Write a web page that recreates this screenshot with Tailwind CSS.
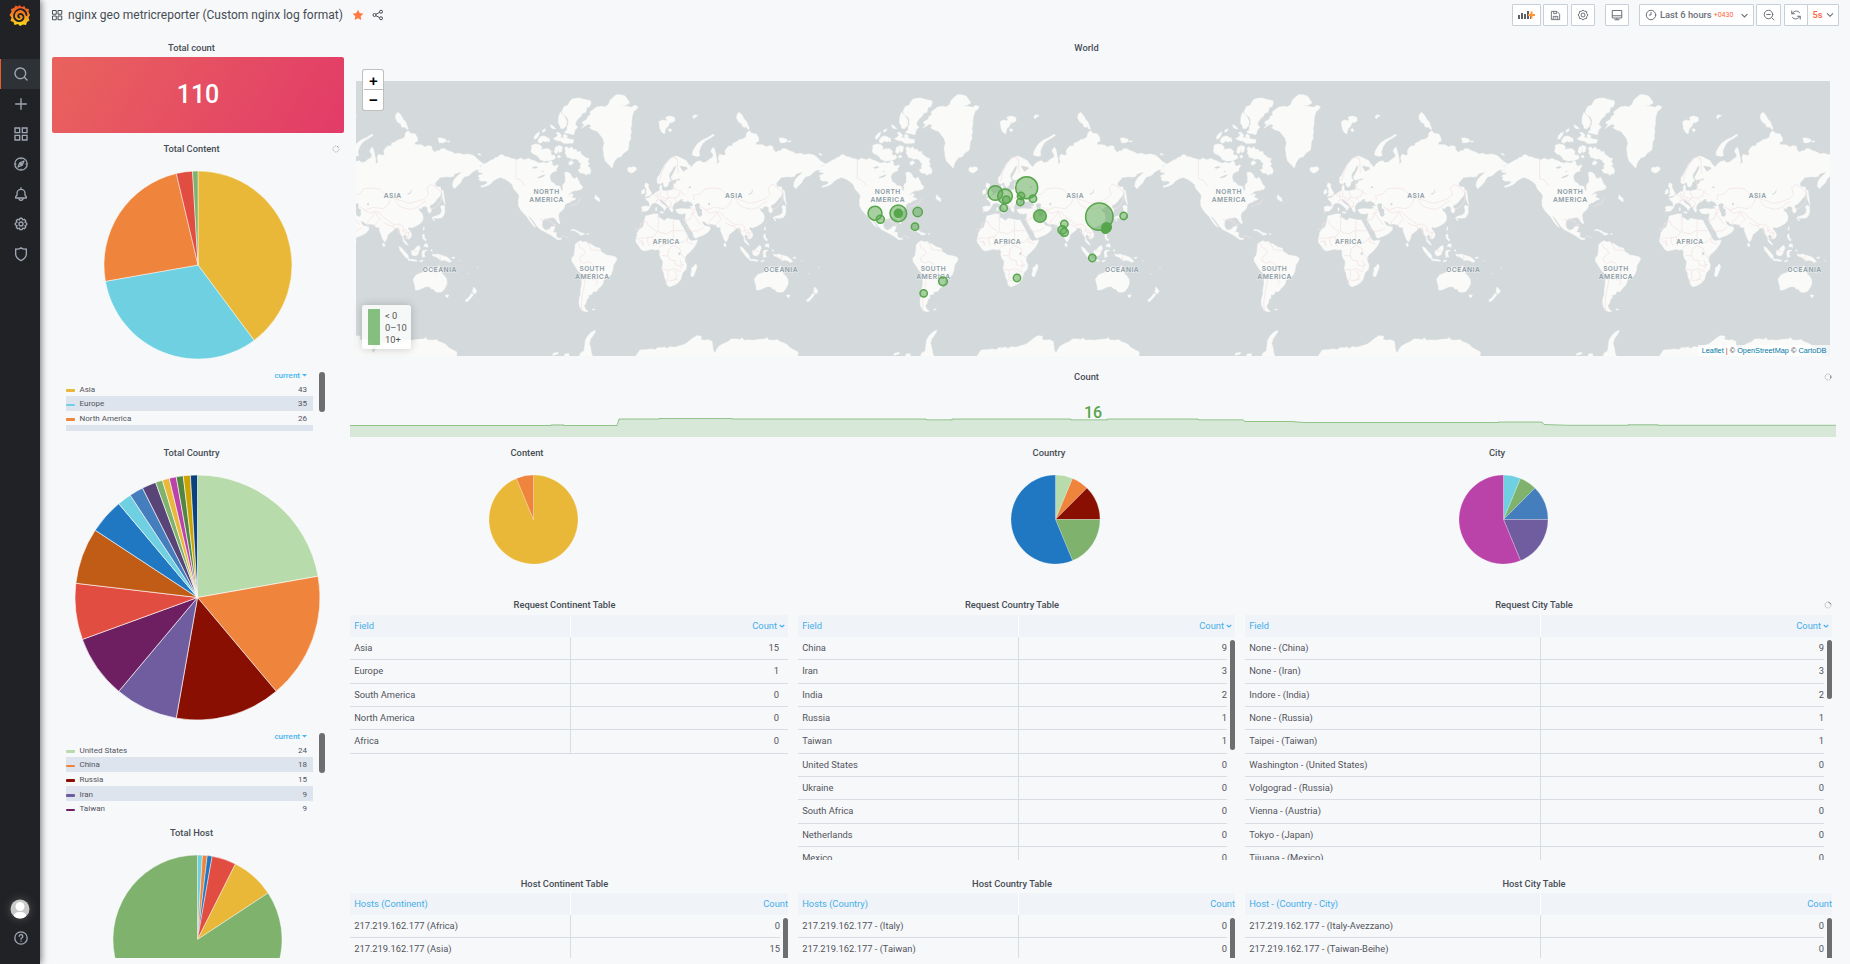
<!DOCTYPE html>
<html lang="en">
<head>
<meta charset="utf-8">
<title>nginx geo metricreporter</title>
<script src="https://cdn.jsdelivr.net/npm/@tailwindcss/browser@4"></script>
</head>
<body class="h-[964px] w-[1850px] overflow-hidden bg-[#f7f8fa] font-['Roboto',sans-serif] text-[9.33px] text-[#52545c]">
<div class="flex h-full">

<!-- side menu -->
<nav class="relative z-10 flex w-10 shrink-0 flex-col items-center bg-[#212226] text-[#9fa7b3] shadow-[1px_0_7px_rgba(0,0,0,.55)]">
  <svg class="mt-[5px] ml-[-1px] size-[21px]" viewBox="0 0 42 42">
    <defs><linearGradient id="gl" x1="0" y1="1" x2="0" y2="0"><stop offset="0" stop-color="#fbe01c"/><stop offset=".45" stop-color="#f7941e"/><stop offset="1" stop-color="#ee4c25"/></linearGradient></defs>
    <path fill="url(#gl)" d="M21 0l4 4 6-2 2 5 7 1-1 6 3 6-3 5 2 6-5 3-2 6-6-1-6 3-4-4-7 2-2-6-6-2 2-7-4-5 4-6-1-6 6-2 3-5 5 2z"/>
    <path fill="none" stroke="#212226" stroke-width="3.6" stroke-linecap="round" d="M35 20C34 10 24 6 17 10c-8 4-9 14-4 19 5 5 14 4 16-3 1-6-5-10-9-7-3 2-2 6 1 6"/>
  </svg>
  <div class="mt-[33px] flex h-[30px] w-full items-center border-l border-[#f05a28] bg-[#2e3236] pl-[12px]">
    <svg class="size-4" viewBox="0 0 24 24" fill="currentColor"><path d="M21.71,20.29,18,16.61A9,9,0,1,0,16.61,18l3.68,3.68a1,1,0,0,0,1.42,0A1,1,0,0,0,21.71,20.29ZM11,18a7,7,0,1,1,7-7A7,7,0,0,1,11,18Z"/></svg>
  </div>
  <div class="ml-[2px] flex flex-col gap-[14px] pt-[7px]">
    <svg class="size-4" viewBox="0 0 24 24" fill="none" stroke="currentColor" stroke-width="2" stroke-linecap="round"><path d="M12 4v16M4 12h16"/></svg>
    <svg class="size-4" viewBox="0 0 24 24" fill="none" stroke="currentColor" stroke-width="2"><path d="M3 3h7v7H3zM14 3h7v7h-7zM3 14h7v7H3zM14 14h7v7h-7z"/></svg>
    <svg class="size-4" viewBox="0 0 24 24" fill="none" stroke="currentColor" stroke-width="2"><circle cx="12" cy="12" r="9.3"/><path d="M16.5 7.5l-2.7 6.3-6.3 2.7 2.7-6.3zM12 3v2M12 19v2M3 12h2M19 12h2" stroke-linejoin="round"/><circle cx="12" cy="12" r=".8"/></svg>
    <svg class="size-4" viewBox="0 0 24 24" fill="none" stroke="currentColor" stroke-width="2" stroke-linejoin="round"><path d="M12 2v3M6 14v-3a6 6 0 0 1 12 0v3l2 2v2H4v-2zM9 18.5a3 3 0 0 0 6 0"/></svg>
    <svg class="size-4" viewBox="0 0 24 24" fill="none" stroke="currentColor" stroke-width="2" stroke-linejoin="round"><path d="M9.5 5l1-2.5h3l1 2.5 2.4-1 2.2 2.2-1 2.4 2.4 1v3l-2.4 1 1 2.4-2.2 2.2-2.4-1-1 2.4h-3l-1-2.4-2.4 1L4.900 16l1-2.400-2.400-1v-3l2.400-1-1-2.400L7.100 4z" transform="translate(0 .9)"/><circle cx="12" cy="12" r="3"/></svg>
    <svg class="size-4" viewBox="0 0 24 24" fill="none" stroke="currentColor" stroke-width="2" stroke-linejoin="round"><path d="M12 2.500c-2 1.800-4.500 2.400-8 2V12c0 4 3 7.500 8 9.800 5-2.300 8-5.800 8-9.800V4.500c-3.500.4-6-.2-8-2z"/></svg>
  </div>
  <div class="mt-auto flex flex-col items-center gap-[11px] pb-[18px]">
    <svg class="size-5 drop-shadow-[0_0_4px_#555]" viewBox="0 0 20 20"><clipPath id="av"><circle cx="10" cy="10" r="9.500"/></clipPath><g clip-path="url(#av)"><path fill="#c9c9c9" d="M0 0h20v20H0z"/><circle cx="10" cy="7.500" r="4.500" fill="#fff"/><path fill="#fff" d="M3.500 20c0-5.500 2-7 6.500-7s6.500 1.500 6.500 7z"/></g></svg>
    <svg class="ml-[2px] size-4" viewBox="0 0 24 24" fill="none" stroke="currentColor" stroke-width="2" stroke-linecap="round"><circle cx="12" cy="12" r="9.300"/><path d="M9.300 9.500a2.700 2.700 0 1 1 4 2.400c-1 .5-1.300 1-1.300 1.800M12 16.600v.2"/></svg>
  </div>
</nav>

<div class="flex min-w-0 flex-1 flex-col">
<!-- toolbar -->
<header class="flex h-[30px] shrink-0 items-center pl-[11px] pr-[11px] text-[#464c54]">
  <svg class="size-3" viewBox="0 0 24 24" fill="none" stroke="currentColor" stroke-width="2"><path d="M3 3h7.500v7.500H3zM14 3h7.500v7.500H14zM3 14h7.500v7.500H3zM14 14h7.500v7.500H14z"/></svg>
  <h1 class="ml-[5px] text-[12px] leading-[31px] whitespace-nowrap">nginx geo metricreporter (Custom nginx log format)</h1>
  <svg class="ml-[9px] size-3" viewBox="0 0 24 24" fill="#ff7941"><path d="M12 1.500l3.300 6.700 7.400 1.100-5.300 5.200 1.200 7.400-6.600-3.500-6.600 3.500 1.200-7.400L1.300 9.300l7.400-1.100z"/></svg>
  <svg class="ml-[8px] size-3" viewBox="0 0 24 24" fill="none" stroke="currentColor" stroke-width="2"><circle cx="5" cy="12" r="3"/><circle cx="18" cy="5.500" r="3"/><circle cx="18" cy="18.500" r="3"/><path d="M7.700 10.700l7.600-4M7.700 13.300l7.600 4"/></svg>
  <div class="ml-auto flex h-[22px] items-stretch text-[#6b6f78]">
    <div class="flex w-[29px] items-center justify-center rounded-[1px] border border-[#c7d0d9] bg-white"><svg class="h-[10px] w-[17px]" viewBox="0 0 17 10"><path fill="#5c6069" d="M0 5h2v4H0zM3 3h2v6H3zM6 4h2v5H6zM9 1h2v8H9zM12 5.500h1V9h-1z"/><path fill="#ff9830" d="M10 4h2.500V1.500h2V4H17v2h-2.500v2.500h-2V6H10z"/></svg></div>
    <div class="ml-[2px] flex w-[25px] items-center justify-center rounded-[1px] border border-[#c7d0d9] bg-white"><svg class="size-[11px]" viewBox="0 0 24 24" fill="none" stroke="currentColor" stroke-width="2" stroke-linejoin="round"><path d="M3 3h12l6 6v12H3zM8 3v5h6V3M7 21v-7h10v7M10 17.500h4"/></svg></div>
    <div class="ml-[3px] flex w-6 items-center justify-center rounded-[1px] border border-[#c7d0d9] bg-white"><svg class="size-[12px]" viewBox="0 0 24 24" fill="none" stroke="currentColor" stroke-width="2" stroke-linejoin="round"><path d="M9 4.500L12 2l3 2.500 4 .5.500 4L22 12l-2.500 3-.5 4-4 .5L12 22l-3-2.500-4-.5-.5-4L2 12l2.500-3 .5-4z"/><circle cx="12" cy="12" r="4"/></svg></div>
    <div class="ml-[10px] flex w-6 items-center justify-center rounded-[1px] border border-[#c7d0d9] bg-white"><svg class="size-[12px]" viewBox="0 0 24 24" fill="none" stroke="currentColor" stroke-width="2" stroke-linejoin="round"><path d="M2.500 3h19v15h-19zM2.500 13.500h19M12 18v3.500M7 21.500h10"/></svg></div>
    <div class="ml-[10px] flex w-[115px] items-center rounded-[1px] border border-[#c7d0d9] bg-white pl-[5px] whitespace-nowrap">
      <svg class="size-[12px]" viewBox="0 0 24 24" fill="none" stroke="currentColor" stroke-width="2" stroke-linecap="round"><circle cx="12" cy="12" r="9.500"/><path d="M12 7v5H8.500"/></svg>
      <span class="ml-[3px] font-medium">Last 6 hours</span><span class="ml-[2px] pt-px text-[7px] text-[#ff5f3c]">+0430</span>
      <svg class="ml-auto mr-[4px] size-[9px]" viewBox="0 0 24 24" fill="none" stroke="currentColor" stroke-width="3" stroke-linecap="round"><path d="M5 9l7 7 7-7"/></svg></div>
    <div class="ml-[2px] flex w-[25px] items-center justify-center rounded-[1px] border border-[#c7d0d9] bg-white"><svg class="size-[12px]" viewBox="0 0 24 24" fill="none" stroke="currentColor" stroke-width="2" stroke-linecap="round"><circle cx="11" cy="11" r="8.500"/><path d="M17.500 17.500L22 22M7.500 11h7"/></svg></div>
    <div class="ml-[3px] flex w-[24px] items-center justify-center rounded-l-[1px] border border-[#c7d0d9] bg-white"><svg class="size-[12px]" viewBox="0 0 24 24" fill="none" stroke="currentColor" stroke-width="2" stroke-linecap="round"><path d="M4 9.500A8.800 8.800 0 0 1 19 7M20 14.500A8.800 8.800 0 0 1 5 17M3.500 4v5.500H9M20.500 20v-5.500H15"/></svg></div>
    <div class="ml-[-1px] flex w-[32px] items-center justify-center gap-[3px] rounded-r-[1px] border border-[#c7d0d9] bg-white font-medium text-[#ff5f3c]">5s<svg class="size-[8px] text-[#6b6f78]" viewBox="0 0 24 24" fill="none" stroke="currentColor" stroke-width="3.200" stroke-linecap="round"><path d="M4 8l8 8 8-8"/></svg></div>
  </div>
</header>

<main class="flex h-[928px] overflow-hidden pt-[11px]">
<!-- left column: totals -->
<section class="ml-[4px] flex w-[308px] shrink-0 flex-col items-center">
  <h2 class="pr-[13px] font-medium leading-[14px] text-[#464c54]">Total count</h2>
  <div class="mt-[2px] flex h-[76px] w-[292px] shrink-0 items-center justify-center rounded-[2px] bg-[linear-gradient(120deg,#e9635d,#e23b68)] text-[25px] font-medium text-white">110</div>
  <div class="relative mt-[9px] w-full pr-[13px] text-center font-medium leading-[14px] text-[#464c54]">Total Content
    <svg class="absolute top-[3px] right-[12px] size-2" viewBox="0 0 16 16" fill="none" stroke="#b3b7bd" stroke-width="2"><path d="M14 8A6 6 0 1 1 8 2" stroke-dasharray="3 1.200"/><path stroke="#7d828a" d="M10 2.500a6 6 0 0 1 3 2.500"/></svg></div>
  <svg class="mt-[15px] mr-px h-[188px] w-[188px] shrink-0" data-pie="43 EAB839,35 6ED0E0,26 EF843C,3 E24D42,1 7EB26D"></svg>
  <div class="mt-[11px] flex h-[61px] w-[264px] shrink-0 overflow-hidden text-[8px]">
    <div class="w-[247px] shrink-0" data-legend="Asia|43|#EAB839;Europe|35|#6ED0E0;North America|26|#EF843C;||"></div>
    <div class="mt-[2px] ml-[6px] h-[40px] w-[6px] rounded-full bg-[#6e6e6e]"></div>
  </div>
  <h2 class="mt-[15px] pr-[13px] font-medium leading-[14px] text-[#464c54]">Total Country</h2>
  <svg class="mt-[15px] mr-px h-[245px] w-[245px] shrink-0" data-pie="24 B7DBAB,18 EF843C,15 890F02,9 705DA0,9 6D1F62,8 E24D42,8 C15C17,5 1F78C1,2 6ED0E0,2 447EBC,2 584477,1 7EB26D,1 EAB839,1 BA43A9,1 508642,1 CCA300,1 0A437C"></svg>
  <div class="mt-[11px] flex h-[81px] w-[264px] shrink-0 overflow-hidden text-[8px]">
    <div class="w-[247px] shrink-0" data-legend="United States|24|#B7DBAB;China|18|#EF843C;Russia|15|#890F02;Iran|9|#705DA0;Taiwan|9|#6D1F62"></div>
    <div class="mt-[2px] ml-[6px] h-[40px] w-[6px] rounded-full bg-[#6e6e6e]"></div>
  </div>
  <h2 class="mt-[14px] pr-[13px] font-medium leading-[14px] text-[#464c54]">Total Host</h2>
  <svg class="mt-[15px] mr-px h-[169px] w-[169px] shrink-0" data-pie="1 6ED0E0,1 EF843C,1 1F78C1,5 E24D42,9 EAB839,91 7EB26D"></svg>
</section>

<!-- right column -->
<section class="ml-[-2px] flex w-[1486px] shrink-0 flex-col">
  <h2 class="pr-[13px] text-center font-medium leading-[14px] text-[#464c54]">World</h2>
  <div class="relative mx-[6px] mt-[26px] h-[275px] shrink-0">
    <svg class="block h-[275px] w-[1474px] bg-[#d4dadc]" viewBox="0 0 1474 275">
      <defs>
        <g id="world">
          <g fill="#fafaf8" stroke="#fafaf8" stroke-width="1.500" stroke-linejoin="round">
            <!-- North America -->
            <path d="M455 300l8-2 2-5 8-1 8-8 8 1 6 5 10 1 7 4 8 1 8 3 6 0 8-5 6 4 8 1 10-4 8 5 9 2 8 5 9 3 10-3 9 3 8-3 5-6 5 6 0 8 8 4 7-5 3 4-6 8 0 7-10 3-8 7-2 8 4 14 8 4 7 8 12 2 3 10 4 5 2-6-1-12 8-10 0-14-2-14 8-2 9 5 5 11 8 5 6-6 6 11 4 10 8 8-3 7-12 4-14 2-12 8-4 6 12-6 5 3-6 7 14 6-14 6-10 8-9 3-2 9-6 8-8 6-4 9 2 13 3 9-2 4-6-6-5-9-8-5-11 2-14 2-7 8-1 14 5 9 7 4 10-3 6-8 11-1-3 10-4 7 11 2-1 11 7 6 8-1 1 4-11 1-10-7-12-8-15-8-16-8-10-11-8-12-11-14-6-4 5 10 9 12 8 13-7-5-11-14-9-14-8-8-9-10-7-13-1-15 3-15-5-8-12-14-4-12-9-8-12-8-14-6-12 4-10 6-9 10-12 6-15 4-2-3 16-6 5-6-6-4-15 0-6-6 4-5-6-3 4-4 10-2-1-5-9-1-5-4 9-2 4-5-4-2 1-5z"/>
            <!-- Arctic archipelago -->
            <path d="M575 256l12-4 12 2 7 8-4 10-8 8-9 4-8-4-4-6 2-8zM597 272l14-5 14-1 9 8-2 8 6 6 1 10-12 4-14 1-14-5-4-8-7-4 4-7zM582 236l2-8 7-8 8-4-4 12-7 9zM594 240l8-10 10-2 9 4 2 8-4 6-9-3-8 6-6-1zM622 234l5 0 2 10-5 2zM607 211l10-5-2 7-7 4zM631 194l8 4 8 8-8 0-6-4zM640 236l8-4 6-7-6-7 8-1 8 8-3 8 7 2-3 8-12-1-5-2zM665 233l14 0 8 4 14 2-2 10-14 1-14 0-8-6zM672 222l10 5-2 6-10-3zM647 260l8 0 0 14-6 8-6-6 2-8zM655 256l12 4-2 14-7 4-2-9zM633 290l9-6 5 8-5 6-8-2zM652 288l6-3 4 6-7 3z"/>
            <path d="M674 264l7-4 6 6 8-6 4 8 10 1 3 7 9-2 2 8 8 6 6 5 10 3-4 8 5 9-6 4 7 6 4 10-4 10-6-3-3 6-9-6-10-1-7-9 9-5-3-6 4-8-6-4-3-7-10-4-8 2-9-5-7-1-2-8-4-4 2-7zM687 306l8-4 6 6-8 7-6-1z"/>
            <path d="M672 140l13-5 3-8 7-9 12-3 12-1 12 4 20 4 2 6-4 12-8 2-4 15-10 3-4 9-8 6-6 9-4 8 8 10-8 8-4 14-12-3-12-2-4-3 8-6 0-10 4-8 0-12-5-10-9-5-6-9zM661 157l8 8 8 10 4 11-3 12-8 8-8-1-2-8-5-8 1-18z"/>
            <!-- Greenland, Iceland -->
            <path d="M725 205l8-6 8-4-13-4-1-5 14-8 2-8 9-6-2-8 9-7 11-8 15-2 10 2 11-8 4-12 8-8 11-9 12 0 14 4 10 14 4 6-10 7-18 3 16 1 18 3 9-6 10 4-4 8-8 5-5 14-2 14 0 14-3 10 2 12-3 10 2 8-6 10-1 14-2 11-14 10-7 10-9 2-8 8-5 8-5 16-9-10-11-11-4-14-1-12-2-12 4-16-5-15-8-10-8-10-14-5-10-6 6-4-6-6-14 0zM862 326l6-5 5 2 6-3 8 2 3 6-8 8-9 3-8-5-3-3 4-2z"/>
            <!-- Newfoundland, Caribbean -->
            <path d="M764 415l3-11 4 6 7 5 1 10-8-4zM692 511l8-3 12 4 10 6-8 1-10-7zM718 521l6-3 10 4-4 2-11 1zM741 521l5 0 0 2-5 0z"/>
            <!-- South America -->
            <path d="M706 553l8-7 8-4 6 4 12-1 4 5 8 2 6 4 8 5 14 4 3 10 9 5 6 5 14 2 15 4 4 7-5 9-6 9-2 15-5 13-9 10-13 6-2 10-6 9-7 6-6 9-12 1-2 8-11 2 1 8-6 6-3 12-5 6 4 10 8 7-8 1-10-4-6-10-3-10 1-16 4-12 0-14 3-16 0-18-1-14-10-9-9-14-9-14-1-9 7-9 2-10zM757 748l8-1 0 2-7 1z"/>
            <!-- Africa, Madagascar -->
            <path d="M917 468l10-2 14-4 13 0 1 10 9 4 9 6 8-7 10 2 14 3 12 0 6 12 6 10 6 12 6 10 5 13 8 6 18-3-2 9-8 13-10 12-12 10-6 10 1 10 5 10-2 14-10 10-3 9-3 12-9 10-10 6-14 5-7-4-4-14-5-12-1-10-6-12 2-12 1-12-7-10-3-10 1-10-5-6-8 2-10-3-12 3-13 3-9-5-6-10-9-12 0-8 3-10 1-10 7-10 9-6 4-12zM1066 612l4 4 0 8-5 12-4 12-6 2-3-6 3-10 0-10 8-6z"/>
            <!-- Eurasia -->
            <path d="M905 441l10-3 14 2-1-12-8-8-4-5 12-2 6-7 9-4 6-6 10-3 0-12 4-7 3 6-1 8 4 4 12 1 8-2 10-2 2-8-1-8 7-2 2-8 14-4-4-4-14 4-8 1-4-8 6-10 8-16 2-10-8 4-6 12-7 10-1 10 6 10-7 4-2 10-6 6-6-4-3-12-9 6-8-3 0-16 7-8 5-12 5-8 6-12 8-8 6-9 12-4 6-4 12 4 8 4 12 6 7 12-8 6-14-3-6 1 6 10 6 8 8-6 6-2-4-10 8-4 6 8 7-9 9-8 12-3 6 6 11-2 6-6 14-9 0-8-6-8 2-8 6-5 4 10 3 16 3 12-1 14 8-9-3-12 4-10 10 3 8-1-2-12 6-10 6-5 10 0 2-8 10-4 8-6 12-3 9-6 2-12 8-7 7 8 14 2 6 10 2 10-10 6 2 6 14 0 8 2 7 5 10-4 10 2 2 10 10 10 2-6 10-1 5-6 10 0 10 6 12 4 10 6 12-2 12 4 14-2 16 4 10 8 8 8 8 6 8 4-9 4-6 2 8 8-6 4-12-1-10 6-6 6-7 6-12 3-7 8-5 10-8 8-10 10-6-8 2-12 5-10 8-8 10-9 2-4-12 4-8 2-4 8-10 2-10-1-20 2-8 9-7 8 0 8 8 4 8 0 2 14-3 12-9 10-5 7-8 8-8 3-2 6 6 8-2 8-6 2-4-8 1-8-8-5-8 2-3 6-9-2 2 8 8 7 4 12-2 12-8 8-12 7-12 5-10-2-2 6 6 6 5 9-1 9-7 6-5-1-2-9-6-4-4 6 2 10 7 7 6 10-7-4-8-8-1-12-7-10-2-12-6-6-8 0-4 6-8 6-10 8-3 12-6 10-6-8-5-14-5-12 0-10-10 0-6-8-12-2-12 1-8-8-9-3 4 10 6 6 8 1 8 4-2 8-8 8-12 7-12 4-10 5-5-4-4-13-7-10-8-14-8-14 2-12 1-9-12 3-12-2-6-8 1-10 12-4 14 0 10 2 16-2-6-10-12-6-10 5-6-6 4-4-8 0-10 8-4 10-4 10-6 3-2 9-5-4-4-10-8-10-9-8-9-7-4 3 6 8 12 8 4 5-4 6-3 4-2-6-8-8-8-6-8-4-10 2-6 8-2 6-8 9-14 1z"/>
            <path d="M917 369l8 3 0 10 6 12 4 6-6 7-14 2 5-8-2-6 2-8-6-8zM905 392l8-5 1 12-9 4zM960 455l10 1-1 4-8-2zM947 443l3 0 0 9-3 0z"/>
            <path d="M1057 285l2-12 8-14 8-10 14-10 14-6 16-10 4 3-12 8-12 7-10 8-8 14-4 12 2 12-8 2-8-2zM957 185l10-5 10 2 10-2 2 10-6 10-6 6-4 16-8-6-5-10zM977 172l12-4 14 4 2 10-10 6-12-4zM985 208l7-2 3 6-6 3zM1058 170l6-6 10 3-8 4-4 6zM1190 170l2-8 6-5 8 8 8 14 6 6 6 16 2 7-6-2-2-6-4 2-8-2-2-8-10-6-6-12zM1318 234l10 0 12 4 2 6-10 4-11 0-2-8zM1344 243l10 0-4 3-5-1zM1437 280l6 2 4 3-7 0z"/>
            <!-- Japan, Sakhalin -->
            <path d="M1329 390l4 2 2 14 2 16 2 12-4-8-3-8-2-14zM1329 436l9 3-1 8 1 8-3 10-6 8-12 2-10-1-6 2-2-3 8-4 14-4 7-8 0-10-3-6zM1303 477l5 3-3 3zM1275 500l2 8-4 3z"/>
            <!-- South-east Asia, Oceania -->
            <path d="M1200 560l8 3 10 12 9 10 3 12-9-4-8-10-9-12zM1228 598l14 0 12 3 0 3-16-2-10-1zM1238 572l8-2 6-8 8-6 4 8-4 8-4 12-8 4-9-4zM1270 574l4-3 11 0-8 4-1 8 4 8-5-2-3 5-2-8zM1271 524l5-2 1 12 6 5-3 4-8-8zM1278 552l8 0 1 10-6-2-6 0zM1300 582l10 2 6-2 12 4 16 5 10 8 4 6-8 2-7-5-10-2-5 2-8-6-7-5-10-3zM1262 603l9-3 2 2-8 4zM1296 571l3-3 1 7zM1152 549l6 3-1 8-5-2zM1358 593l10-2-3 5zM1382 600l6 5M1405 640l6 3M1434 624l6-3"/>
            <path d="M1252 645l8-4 10-3 8-8 6-3 4-6 8 0 6 0-3 8 8 8 6 1 3-11 5-10 4 10 5 14 8 8 6 10 0 14-6 12-8 10-12 2-8-2-6-8-6 0-6-7-12 0-10 5-12 5-9 0 0-8-3-12-3-12zM1340 705l10 0-4 8-4-2zM1424 681l5 5 5 8-6 8-7-6zM1418 700l6 3-6 9-10 11-7 2-1-5 10-8z"/>
            <!-- Antarctica -->
            <path d="M886 890l6-8 8-12 20-1 12-2 14 2 6-6 14 0 8-2 6 5 10-6 14 2 20-6 12-4 8-6 12-10 14-9 14 2-2 10 14 2 8-2 12 5 4 30 6 4 4-10 8-10 12-7 14-6 10-8 14 0 14 2 3-6 8 8 14-1 14 1 8-2 14-1 14-1 3-5 6 8 14 1 14-2 6 6 10 3 12 6 6 8 14 8 12 6-1 14zM766 811l-12 6-10 10-8 14-2 18-2 14-11 7-2 8 40 4-5-14-2-14-4-14 4-14 6-8 8-12zM640 880l14-3 0 5-16 4zM675 882l12-1 0 7-14 0z"/>
          </g>
          <!-- inland water -->
          <g fill="#d4dadc"><path d="M1064 434l8-4 8 2-2 8 2 6 6 2-1 8 2 8-6 6-7-2-2-8-4-10zM998 440l6-10 8-4 10 8 8-4-4-5 8 0 0 6 12 6 10 8-14 1-18-1-12 2-14 1zM1105 430l5-2 0 8-5 0zM575 323l12-5 8 4-12 4zM593 352l14-6 10-3-8 8-14 4zM603 335l8-3-2 5zM676 434l8-6 8 4-6 4 0 8-6-2zM690 436l8-3 4 8-6 0zM1015 578l6-2 0 8-6 2zM1224 402l9-4 6-12-2 12-8 6zM1045 382l5-4 4 4-6 3z"/></g>
          <!-- borders -->
          <g fill="none" stroke="#f2e2e3" stroke-width="2.200" stroke-linejoin="round">
            <path d="M528 296v60l14 4 14 18M600 478l10 2 12 0 12 6 6 8 8 0M722 416l-8 14-12 4-14 6M664 532l8-6 6 6 8 0M716 550l2 12 12 6 6 12-14 10-4 12 14 8 10-6 14 6 6 12 10 10-2 12 6 6-10 10 8 6-8 10M740 546l10 14 4 10 12 0 14 2M728 640l8 6-2 24-6 30-4 30 2 24M740 625l10 10-4 12-10 6M762 640l-8 12 8 10"/>
            <path d="M886 508l14-2 2-16 18-6 4 12 28 20-12 14-22 4-18 0-10 4M952 466l4 18-2 16 2 16 24 6 20-12V482M1000 512l0 14 0 12 10 10 20-2 14-14M1000 512h32M924 530l-2 14 6 14M938 530l4 28M958 562l10-6 16-8 14-12M966 586l18 2 6 12 16 2 0 12 10 4 16-4M984 588l2-20 14-12 20 10 2 16 18 16M964 628l22 2 16-4 12 6 10 2M984 632l0 22-8 18M1002 632l10 16-10 12-16 2M1020 600l6 14-4 12M1000 662l10-6 6 8M906 540l4 16M1042 530l0 16 18 6M894 544l14 2 2 12"/>
            <path d="M958 364l8-30 14-28 18-16 14 10 2 40M1012 300l-6-10M1000 365l2 22 14 4 18 14M950 398l6 16-8 10M962 394l-2 16 18 6 8-2M940 404l14 8M980 392l6 22-10 8-18-4-10 8M986 412l16 2 14-6 6-16M986 420l8 8-2 14M976 424l6 18 12-2M1002 414l10 12M906 446l0 14M1062 420l-2-14 22-4 14-16 30-2 18 4 14 14 20 10 8 4 22 6 22 8 18-4 26-8 16-14-6-20 12-12 20 14 14 14-4 24-16 20-14 2M1176 416l-8 18-16 12-30-4-22 8-18-10M1190 422l10 16 16 6 20 4 20-6 12-12 14-6M1094 450l18 10 16-6 14 4 10 12 14 10 20 14 14-2 14 8-2 12 10 8 12-4M1130 456l-8 14-16 16 4 14M1130 456l8 14 6 8-14 14-10 10M1156 488l14 8 12 2M1184 496l2 12M1200 500l-2 14 10 14M1210 516l8-8 12 12-4 16-10 0M1028 478l12 2 12-4 4-18 10-2M1056 458l10 14 16 22M1040 482l-6 14M1038 500l18 14 20-2 14-10M1056 450l12-2M1240 572l16 2M1324 586v20"/>
          </g>
          <g fill="#8d9ca6" stroke="#fafaf8" stroke-opacity=".65" stroke-width="3" paint-order="stroke" text-anchor="middle" font-family="Inter, sans-serif" font-weight="600" font-size="20">
            <text x="1181" y="413" textLength="52">ASIA</text>
            <text x="619" y="402" textLength="77">NORTH</text><text x="619" y="426" textLength="102">AMERICA</text>
            <text x="978" y="551" textLength="80">AFRICA</text>
            <text x="1322" y="637" textLength="101">OCEANIA</text>
            <text x="756" y="633" textLength="75">SOUTH</text><text x="756" y="657" textLength="102">AMERICA</text>
          </g>
        </g>
      </defs>
      <g transform="translate(-16 -21) scale(.33333)">
        <use href="#world" x="-1023.500"/><use href="#world"/><use href="#world" x="1023.500"/><use href="#world" x="2047"/><use href="#world" x="3071"/><use href="#world" x="4094.500"/>
      </g>
      <g transform="translate(464 -21) scale(.33333)" fill="#56a64b" fill-opacity=".5" stroke="#56a64b" stroke-width="4.500">
        <circle cx="165" cy="460" r="21"/><circle cx="181" cy="478" r="12"/><circle cx="235" cy="460" r="25"/><circle cx="235" cy="460" r="12" fill-opacity="1"/><circle cx="293" cy="456" r="14"/><circle cx="285" cy="500" r="11"/>
        <circle cx="369" cy="664" r="13"/><circle cx="311" cy="700" r="11"/><circle cx="591" cy="654" r="11"/><circle cx="817" cy="594" r="11"/>
        <circle cx="526" cy="399" r="22"/><circle cx="555" cy="409" r="22"/><circle cx="559" cy="419" r="11"/><circle cx="551" cy="444" r="11"/>
        <circle cx="620" cy="383" r="33"/><circle cx="603" cy="408" r="11"/><circle cx="601" cy="426" r="11"/><circle cx="639" cy="416" r="11"/>
        <circle cx="660" cy="468" r="19" fill-opacity=".75"/><circle cx="733" cy="492" r="11"/><circle cx="727" cy="510" r="13"/><circle cx="733" cy="517" r="12"/>
        <circle cx="838" cy="470" r="41"/><circle cx="860" cy="502" r="14" fill-opacity="1"/><circle cx="856" cy="509" r="11" fill-opacity="1"/><circle cx="911" cy="468" r="11"/>
      </g>
    </svg>
    <div class="absolute top-[-12px] left-[6px] w-[22px] rounded-[3px] border border-black/25 bg-white pl-px text-center font-['Liberation_Sans',sans-serif] text-[15px] font-bold text-black">
      <div class="h-[20px] border-b border-[#bbb] leading-[21px]">+</div><div class="h-[20px] leading-[20px]">−</div>
    </div>
    <div class="absolute top-[224px] left-[6px] flex h-[44px] w-[49px] gap-[5px] rounded-[3px] bg-white/80 py-[4px] pl-[6px] leading-[12px] text-[#555] shadow-[0_0_10px_rgba(0,0,0,.2)]">
      <div class="h-[36px] w-[12px] bg-[#56a64b]/70"></div><div class="pt-px">&lt; 0<br>0–10<br>10+</div>
    </div>
    <div class="absolute right-0 bottom-0 bg-white/70 px-[3.500px] font-['Liberation_Sans',sans-serif] text-[7.330px] leading-[11px] whitespace-nowrap text-[#333]"><span class="text-[#0078a8]">Leaflet</span> <span class="text-[#a33]">|</span> © <span class="text-[#0078a8]">OpenStreetMap</span> © <span class="text-[#0078a8]">CartoDB</span></div>
  </div>

  <div class="relative mt-[14px] pr-[13px] text-center font-medium leading-[14px] text-[#464c54]">Count
    <svg class="absolute top-[3px] right-[4px] size-2" viewBox="0 0 16 16" fill="none" stroke="#b3b7bd" stroke-width="2"><circle cx="8" cy="8" r="6" stroke-dasharray="3 1.700"/><path stroke="#7d828a" d="M13 5a6 6 0 0 1 0 6"/></svg></div>
  <div class="relative h-[53px] shrink-0">
    <svg class="block h-[53px] w-[1486px]" viewBox="0 0 1486 53"><path fill="#d7e8d9" d="M0 41.500H201V40.500H214V41.500H267L269 35H309V34.500H382V35H576V36H602V35H721V36H757V35H848V36H893L895 37.500H942L954 38.500H1148V38H1192L1194 40.500L1220 41.500H1278V40.500H1308V41.500H1486V53H0z"/><path fill="none" stroke="#56a64b" stroke-opacity=".6" stroke-width="1" d="M0 41.500H201V41H214V41.500H267L269 35H309V34.500H382V35H576V35.800H602V35H721V35.800H757V35H848V35.800H893L895 37.500H942L954 38.500H1148V38H1192L1194 40.500L1220 41.300H1278V40.800H1308V41.300H1486"/></svg>
    <div class="absolute inset-x-0 top-[19px] text-center text-[16px] leading-[20px] font-medium text-[#56a64b]">16</div>
  </div>

  <div class="mt-[9px] flex shrink-0 font-medium text-[#464c54]">
    <div class="flex w-[367px] flex-col items-center"><h2 class="pr-[13px] leading-[14px]">Content</h2><svg class="mt-[15px] h-[89px] w-[89px]" data-pie="15 EAB839,1 EF843C"></svg></div>
    <div class="flex w-[677px] flex-col items-center"><h2 class="pr-[13px] leading-[14px]">Country</h2><svg class="mt-[15px] h-[89px] w-[89px]" data-pie="1 B7DBAB,1 EF843C,2 890F02,3 7EB26D,9 1F78C1"></svg></div>
    <div class="flex w-[219px] flex-col items-center"><h2 class="pr-[13px] leading-[14px]">City</h2><svg class="mt-[15px] h-[89px] w-[89px]" data-pie="1 6ED0E0,1 7EB26D,2 447EBC,3 705DA0,9 BA43A9"></svg></div>
  </div>

  <div class="relative mt-[34px] flex shrink-0 gap-[10px]" id="req">
    <svg class="absolute top-[3px] right-[4px] size-2" viewBox="0 0 16 16" fill="none" stroke="#b3b7bd" stroke-width="2"><circle cx="8" cy="8" r="6" stroke-dasharray="3 1.700"/><path stroke="#7d828a" d="M9 2.500a6 6 0 0 1 4.500 4"/></svg>
  </div>
  <div class="mt-[17px] flex shrink-0 gap-[10px]" id="host"></div>
</section>
</main>
</div>
</div>

<script>
// Pie charts: slices run clockwise from twelve o'clock
document.querySelectorAll('[data-pie]').forEach(svg => {
  const parts = svg.dataset.pie.split(',').map(p => p.split(' '));
  const total = parts.reduce((s, p) => s + +p[0], 0);
  const pt = a => (100 * Math.sin(a)).toFixed(3) + ' ' + (-100 * Math.cos(a)).toFixed(3);
  const w = 200 / svg.getBoundingClientRect().width;
  let a = 0, out = '';
  for (const [v, c] of parts) {
    const b = a + v / total * 2 * Math.PI;
    out += `<path d="M0 0L${pt(a)}A100 100 0 ${b - a > Math.PI ? 1 : 0} 1 ${pt(b)}Z" fill="#${c}" stroke="#fff" stroke-opacity=".75" stroke-width="${w}"/>`;
    a = b;
  }
  svg.setAttribute('viewBox', '-100 -100 200 200');
  svg.innerHTML = out;
});

// Legends
document.querySelectorAll('[data-legend]').forEach(el => {
  el.innerHTML = '<div class="flex h-[11.500px] items-center justify-end gap-[2px] pr-[6px] font-medium leading-[11px] text-[#45b5f0]">current<svg class="size-[5px]" viewBox="0 0 10 10" fill="currentColor"><path d="M0 2h10L5 7z"/></svg></div>' +
    el.dataset.legend.split(';').map((r, i) => {
      const [n, v, c] = r.split('|');
      const stripe = i % 2 ? 'bg-[#dde4ed]' : '';
      if (!n) return `<div class="h-[14.670px] ${stripe}"></div>`;
      return `<div class="flex h-[14.670px] items-center pt-[2px] pr-[6px] ${stripe}"><i class="mt-px mr-[4.500px] h-[2.500px] w-[9px] rounded-[1px]" style="background:${c}"></i><span>${n}</span><span class="ml-auto">${v}</span></div>`;
    }).join('');
});

// Tables
const table = (t) => `
  <div class="${t.w} shrink-0">
    <h2 class="pr-[9px] text-center font-medium leading-[14px] text-[#464c54]">${t.title}</h2>
    <div class="${t.gap} flex h-[22px] items-center bg-[#f0f3f8] text-[#45aee8]">
      <div class="${t.c} flex h-full shrink-0 items-center border-r border-white pl-[4.200px]">${t.head}</div>
      <div class="flex flex-1 items-center justify-end gap-[2px] ${t.sort ? 'pr-[3px]' : ''}">Count${t.sort ? '<svg class="size-[6px]" viewBox="0 0 12 12" fill="none" stroke="currentColor" stroke-width="2.200"><path d="M1.500 4l4.500 4 4.500-4"/></svg>' : ''}</div>
    </div>
    <div class="${t.h} relative overflow-hidden">
      <div class="${t.bar ? 'mr-[8px]' : ''}">${t.rows.map(([n, v]) => `<div class="flex h-[23.330px] border-b border-[#d8dde3] leading-[22px]"><div class="${t.c} shrink-0 border-r border-[#d8dde3] pl-[4.200px]">${n}</div><div class="flex-1 text-right ${t.bar ? '' : 'pr-[9px]'}">${v}</div></div>`).join('')}</div>
      ${t.bar ? `<div class="${t.bar} absolute top-[3px] right-0 w-[5.500px] rounded-full bg-[#6e6e6e]"></div>` : ''}
    </div>
  </div>`;
const R = s => s.split(';').map(r => r.split('|'));
const A = { w: 'w-[438px]', c: 'w-[221px]' }, B = { w: 'w-[437px]', c: 'w-[221px]' }, C = { w: 'w-[587px]', c: 'w-[296px]' };
const q = { gap: 'mt-[3px]', h: 'h-[223px]', sort: 1, head: 'Field' }, k = { gap: 'mt-[2px]', h: 'h-[43px]', bar: 'h-[80px]' };
document.getElementById('req').insertAdjacentHTML('beforeend',
  table({ ...A, ...q, title: 'Request Continent Table', rows: R('Asia|15;Europe|1;South America|0;North America|0;Africa|0') }) +
  table({ ...B, ...q, title: 'Request Country Table', bar: 'h-[110px]', rows: R('China|9;Iran|3;India|2;Russia|1;Taiwan|1;United States|0;Ukraine|0;South Africa|0;Netherlands|0;Mexico|0') }) +
  table({ ...C, ...q, title: 'Request City Table', bar: 'h-[59px]', rows: R('None - (China)|9;None - (Iran)|3;Indore - (India)|2;None - (Russia)|1;Taipei - (Taiwan)|1;Washington - (United States)|0;Volgograd - (Russia)|0;Vienna - (Austria)|0;Tokyo - (Japan)|0;Tijuana - (Mexico)|0') }));
document.getElementById('host').innerHTML =
  table({ ...A, ...k, title: 'Host Continent Table', head: 'Hosts (Continent)', rows: R('217.219.162.177 (Africa)|0;217.219.162.177 (Asia)|15') }) +
  table({ ...B, ...k, title: 'Host Country Table', head: 'Hosts (Country)', rows: R('217.219.162.177 - (Italy)|0;217.219.162.177 - (Taiwan)|0') }) +
  table({ ...C, ...k, title: 'Host City Table', head: 'Host - (Country - City)', rows: R('217.219.162.177 - (Italy-Avezzano)|0;217.219.162.177 - (Taiwan-Beihe)|0') });
</script>
</body>
</html>
